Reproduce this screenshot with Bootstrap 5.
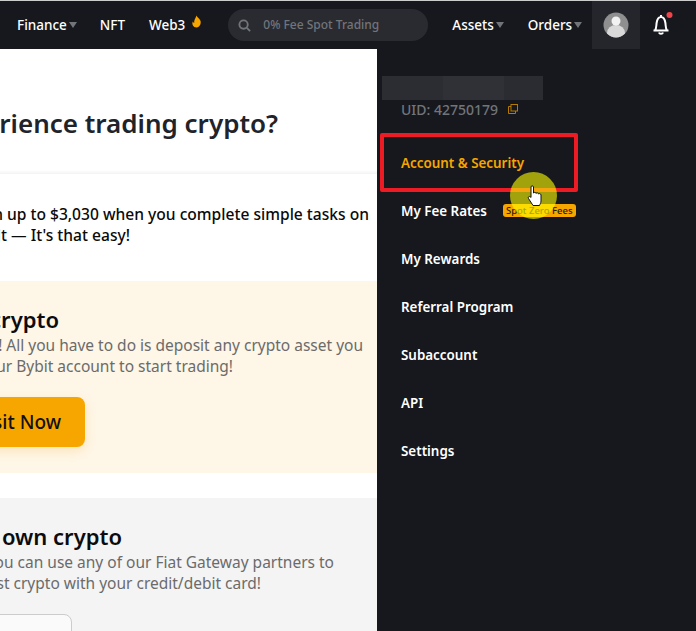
<!DOCTYPE html>
<html lang="en">
<head>
<meta charset="utf-8">
<title>Bybit</title>
<link href="https://cdn.jsdelivr.net/npm/bootstrap@5.3.0/dist/css/bootstrap.min.css" rel="stylesheet">
<style>
html,body{height:631px;overflow:hidden;margin:0;background:#fff}
body{font-family:"Noto Sans","Liberation Sans",sans-serif;position:relative;border-top:1px solid #ccc}
.topbar{height:48px;background:#17181e;color:#fff;font-size:13.5px;font-weight:500;padding-left:17px}
.navi{color:#fff;text-decoration:none;white-space:nowrap}
.gap-nav{margin-left:24px}
.gap-first{margin-left:23px}
.caret{display:inline-block;width:0;height:0;border-left:4px solid transparent;border-right:4px solid transparent;border-top:6px solid #71757a;margin-left:2px;vertical-align:2px}
.flame{margin:0 0 8px 6px}
.search-pill{width:200px;height:32px;border-radius:16px;background:#2a2b31;color:#71757a;font-size:12px;font-weight:500;padding-left:10px;margin:0 24px 0 26px}
.search-label{margin-left:12px}
.avatar-cell{width:48px;height:48px;background:#25262c;margin-left:10px}
.bell{margin-left:12px}
.stage{height:582px}
.leftcol{width:377px;overflow:hidden;background:#fff;flex:none}
.inner{white-space:nowrap}
.rline{display:flex;justify-content:flex-end}
.to278{width:278px}.to369{width:369px}.to130{width:130px}.to59{width:59px}.to363{width:363px}.to233{width:233px}.to85{width:85px}.to122{width:122px}.to334{width:334px}.to261{width:261px}.to72{width:72px}
.headblock{height:121px;padding-top:56px}
.headblock h2{font-size:26px;font-weight:600;line-height:36px;color:#21232a;margin:0}
.fade-line{height:4px;background:linear-gradient(#fff,#f3f3f3)}
.earn{height:107px;padding-top:30px;font-size:15.6px;font-weight:500;line-height:21px;color:#0a0a0a}
.creamy{height:192px;background:#fef6e7;padding-top:23px}
.greyish{background:#f4f4f4;height:140px;padding-top:23px;margin-top:25px}
.sect-title{font-size:22px;font-weight:600;line-height:30px;color:#0c0c0f;margin:0 0 1px}
.sect-text{font-size:15.5px;line-height:21px;color:#6b6b6b;margin:0}
.btn-dep{flex:none;background:#f7a600;color:#111;font-size:19px;font-weight:500;height:50px;width:185px;border-radius:8px;border:0;margin-top:20px;box-shadow:0 4px 12px rgba(247,166,0,.2);text-align:right;padding-right:24px}
.btn-outl{flex:none;background:#fafafa;width:172px;height:60px;border:1px solid #ccc;border-radius:8px;margin-top:20px;display:block}
.panel{flex:1;background:#17181e;color:#fff;padding-top:27px}
.redact{width:161px;height:24px;margin-left:5px;background:linear-gradient(90deg,#2c2d33 0 61px,#303137 61px 122px,#2b2c32 122px)}
.uid{margin:0 0 0 24px;color:#71757a;font-size:14px;font-weight:500;line-height:20px}
.copy-ic{margin-left:10px;margin-bottom:3px}
.menu-list{margin:19px 0 0 0;padding:0;list-style:none}
.menu-list li{height:48px;padding-left:24px;font-size:13.4px;font-weight:600;display:flex;align-items:center}
.menu-list li.on{color:#f7a600}
.zero{background:#f7a600;color:#2a2000;font-size:9.5px;font-weight:500;height:13px;line-height:13px;padding:0 3px;border-radius:3px;margin-left:16px;margin-top:-1px}
.annot-box{position:absolute;left:380px;top:132px;width:198px;height:59px;border:4px solid #ed1c24;border-radius:2px}
.annot-glow{position:absolute;left:510px;top:171px;width:47px;height:47px;border-radius:50%;background:rgba(255,255,0,.6)}
.annot-hand{position:absolute;left:527px;top:184px;width:17px;height:22px}
</style>
</head>
<body>
<nav class="topbar d-flex align-items-center">
  <a class="navi" href="#">Finance<span class="caret"></span></a>
  <a class="navi gap-first" href="#">NFT</a>
  <a class="navi gap-nav" href="#">Web3</a>
  <svg class="flame" width="11" height="13" viewBox="0 0 12 13"><path fill="#f7a600" d="M6 0c.5 2 3 3 4.200 5.500C11.500 8.500 9.500 13 6 13S.5 9.500 2 6.500c.3 1 .8 1.500 1.500 1.700C3 5 5 3 6 0z"/></svg>
  <div class="search-pill d-flex align-items-center">
    <svg width="13" height="13" viewBox="0 0 14 14" fill="none" stroke="#71757a" stroke-width="2"><circle cx="6" cy="6" r="4.500"/><path d="M9.500 9.500l3.500 3.500"/></svg>
    <span class="search-label">0% Fee Spot Trading</span>
  </div>
  <a class="navi" href="#">Assets<span class="caret"></span></a>
  <a class="navi gap-nav" href="#">Orders<span class="caret"></span></a>
  <div class="avatar-cell d-flex align-items-center justify-content-center">
    <svg width="26" height="26" viewBox="0 0 26 26"><defs><clipPath id="av"><circle cx="13" cy="13" r="12.500"/></clipPath></defs><circle cx="13" cy="13" r="12.500" fill="#8f8f8f"/><g clip-path="url(#av)"><ellipse cx="13" cy="21" rx="9" ry="8" fill="#d9d9d9"/><circle cx="13" cy="9" r="4.500" fill="#f2f2f2"/></g></svg>
  </div>
  <svg class="bell overflow-visible" width="20" height="24" viewBox="0 0 20 24" fill="none" stroke="#fff" stroke-width="2"><path d="M1.500 17.500h15M3 17.500c1.500-2 1.200-5 1.600-7.500C5.100 6.500 7 4 9 4s3.900 2.500 4.400 6c.4 2.500.1 5.500 1.600 7.500M9 2v2"/><path d="M7 19.500c.5 1.800 3.500 1.800 4 0"/><circle cx="17.500" cy="2" r="3" fill="#ef454a" stroke="none"/></svg>
</nav>
<div class="stage d-flex">
  <main class="leftcol">
    <div class="inner">
      <div class="headblock"><h2 class="rline to278">No experience trading crypto?</h2></div>
      <div class="fade-line"></div>
      <div class="earn">
        <div class="rline to369">Earn up to $3,030 when you complete simple tasks on</div>
        <div class="rline to130">Bybit — It's that easy!</div>
      </div>
      <section class="creamy">
        <h3 class="sect-title rline to59">Deposit crypto</h3>
        <p class="sect-text rline to363">Got crypto? Great! All you have to do is deposit any crypto asset you</p>
        <p class="sect-text rline to233">hold into your Bybit account to start trading!</p>
        <div class="rline to85"><button class="btn btn-dep" type="button">Deposit Now</button></div>
      </section>
      <section class="greyish">
        <h3 class="sect-title rline to122">Don't own crypto</h3>
        <p class="sect-text rline to334">No problem! You can use any of our Fiat Gateway partners to</p>
        <p class="sect-text rline to261">invest crypto with your credit/debit card!</p>
        <div class="rline to72"><span class="btn btn-outl"></span></div>
      </section>
    </div>
  </main>
  <aside class="panel">
    <div class="redact"></div>
    <p class="uid d-flex align-items-center">UID: 42750179
      <svg class="copy-ic" width="10" height="10" viewBox="0 0 10 10" fill="none" stroke="#b57a00" stroke-width="1"><rect x="3" y=".5" width="6.500" height="6.500"/><path d="M3 2.500H.5v7h7V7"/></svg>
    </p>
    <ul class="menu-list">
      <li class="on">Account &amp; Security</li>
      <li>My Fee Rates<span class="badge zero">Spot Zero Fees</span></li>
      <li>My Rewards</li>
      <li>Referral Program</li>
      <li>Subaccount</li>
      <li>API</li>
      <li>Settings</li>
    </ul>
  </aside>
</div>
<div class="annot-box"></div>
<div class="annot-glow"></div>
<svg class="annot-hand" viewBox="0 0 17 22"><path fill="#fff" stroke="#111" stroke-width="1" d="M4 2c0-1.500 2.500-1.500 2.500 0v6c.5-1 2.500-1 2.500.5.5-1 2.500-1 2.500.5.5-.8 2.500-.5 2.500 1V16c0 2-1 3-1.500 4.500H6L1.500 13.500c-1-1.500 1-3 2.500-1z"/></svg>
</body>
</html>
